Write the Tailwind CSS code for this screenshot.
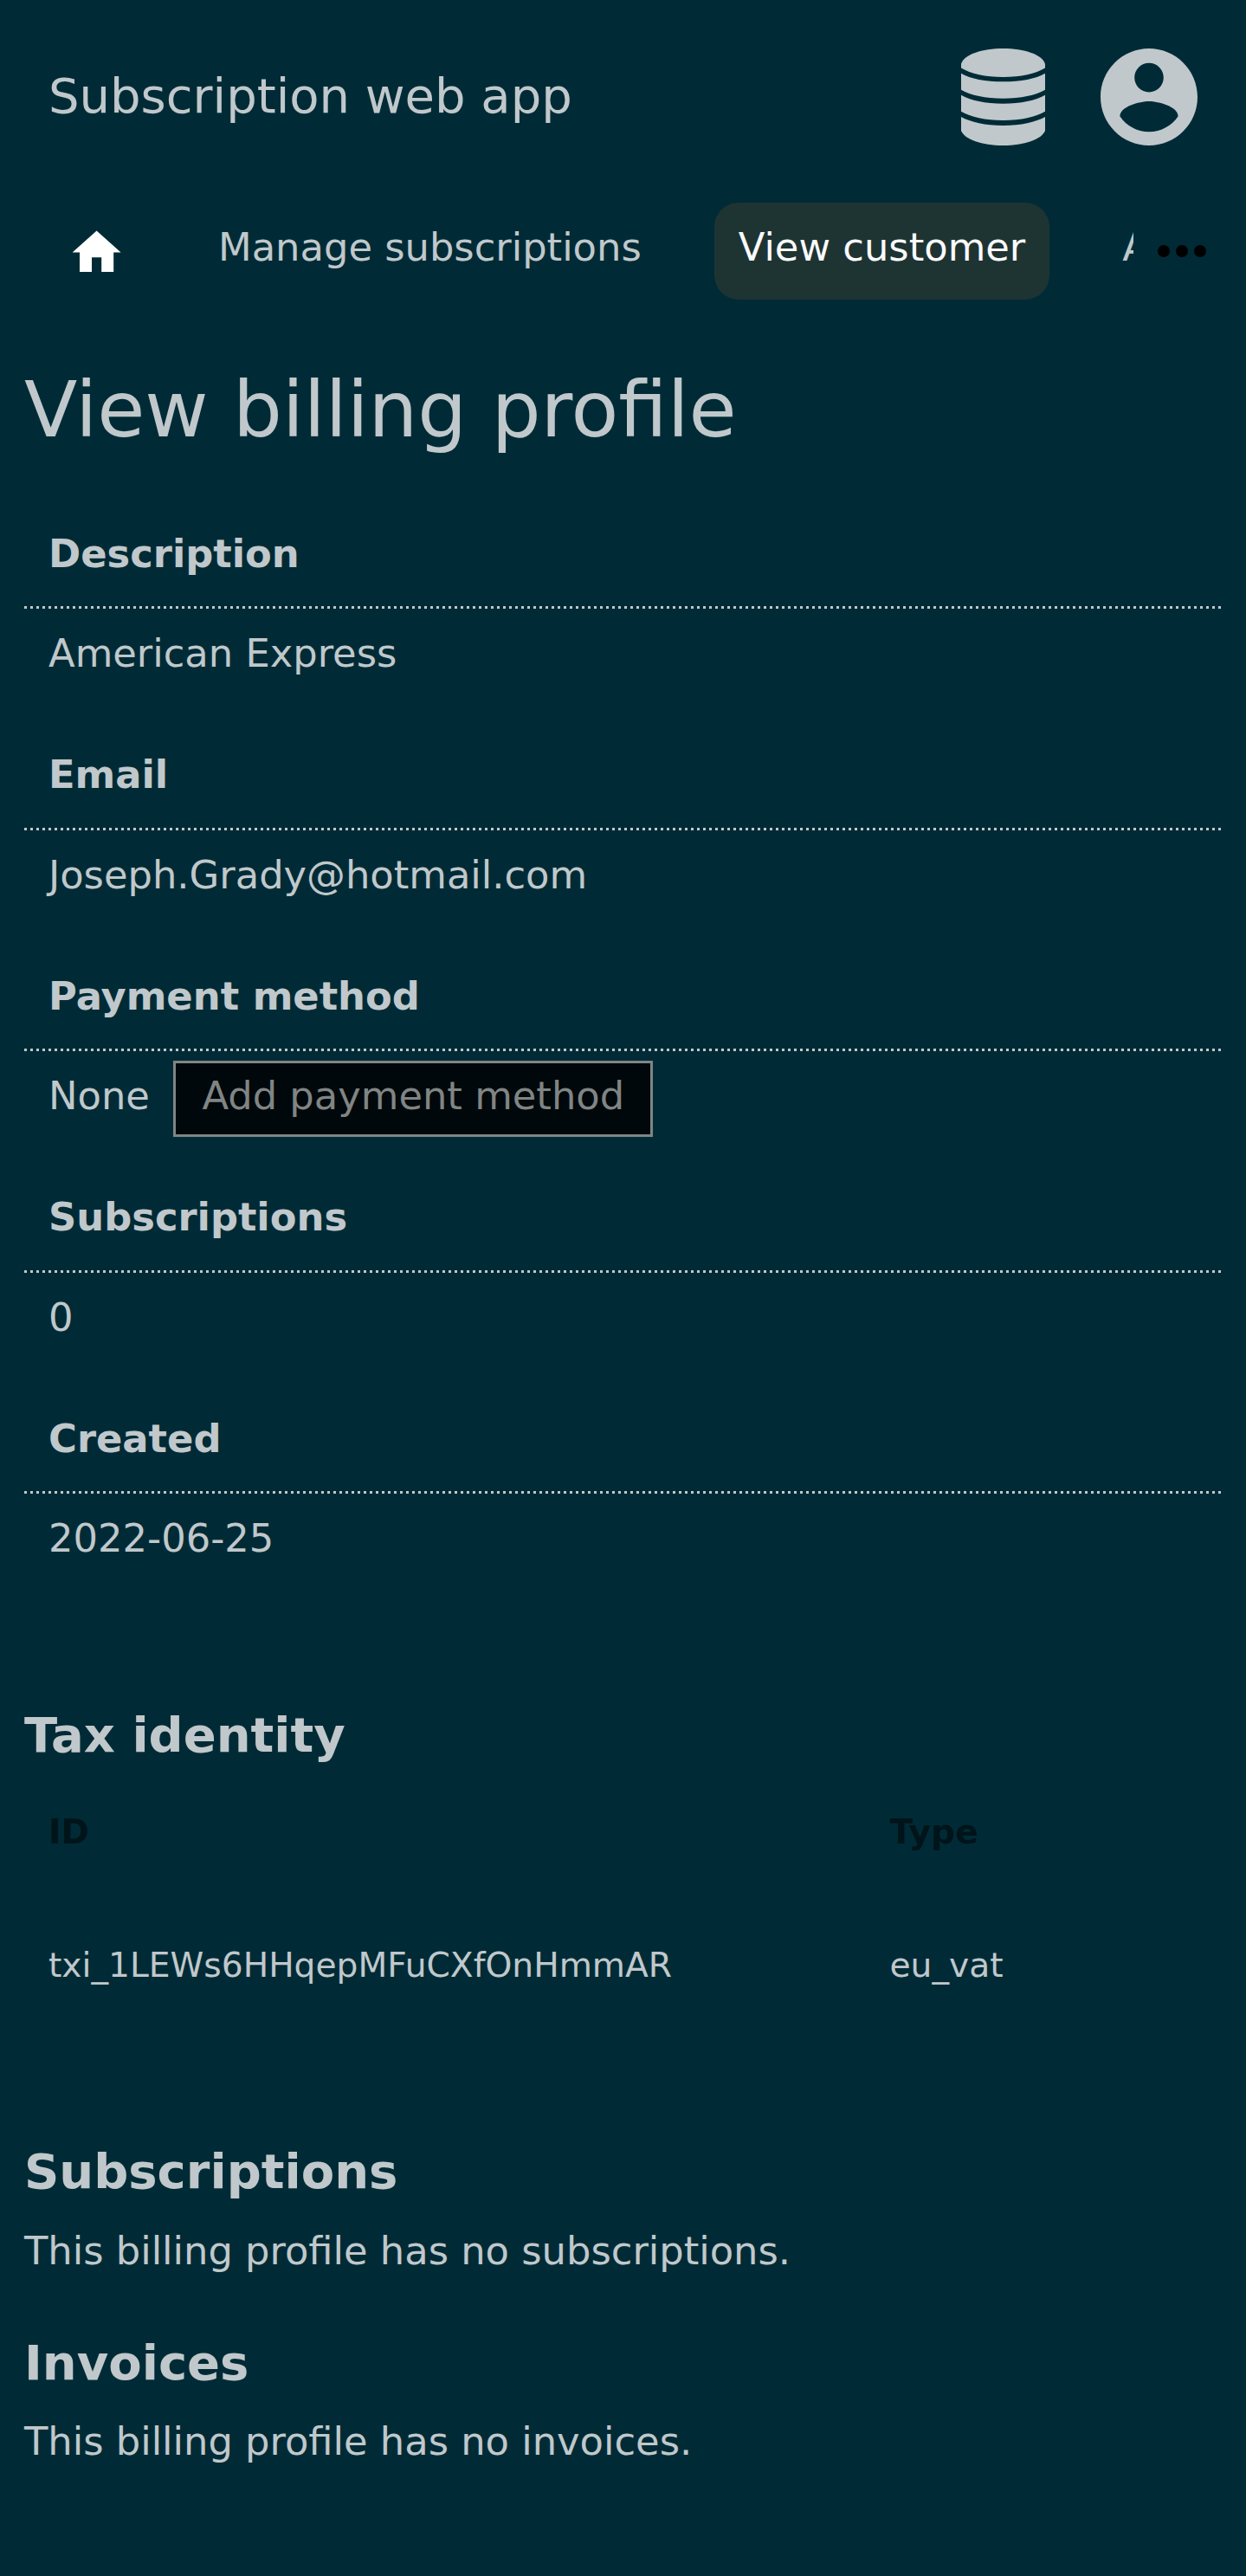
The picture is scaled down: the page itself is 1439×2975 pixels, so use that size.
<!DOCTYPE html>
<html lang="en">
<head>
<meta charset="utf-8">
<title>Subscription web app</title>
<script src="https://cdn.jsdelivr.net/npm/@tailwindcss/browser@4"></script>
</head>
<body class="bg-[#002b36] text-[#c0c8cb] font-['DejaVu_Sans',sans-serif] text-[44.8px] min-h-[2975px] overflow-x-hidden">
<header class="flex h-[224px] items-center justify-between pl-[56px] pr-[56.5px]">
  <div class="text-[56px] leading-[64px] pb-[3px]">Subscription web app</div>
  <div class="flex items-center gap-[64px]">
    <svg class="w-[97px] h-[112px]" viewBox="0 0 97 112" fill="currentColor">
      <path d="M0 18C3 7 24 0 48.500 0S94 7 97 18v4.500C86 29 69 33 48.500 33S11 29 0 22.500z"/>
      <path d="M0 28.700C11 35 28 38.300 48.500 38.300S86 35 97 28.700v19C86 54 69 57.700 48.500 57.700S11 54 0 47.700z"/>
      <path d="M0 53.700C11 60 28 63.700 48.500 63.700S86 60 97 53.700v19C86 79 69 83 48.500 83S11 79 0 72.700z"/>
      <path d="M0 79C11 85 28 89 48.500 89S86 85 97 79v16C93 105 73 112 48.500 112S4 105 0 95z"/>
    </svg>
    <svg class="w-[112px] h-[112px]" viewBox="2 2 20 20" fill="currentColor"><path d="M12 2C6.480 2 2 6.480 2 12s4.480 10 10 10 10-4.480 10-10S17.520 2 12 2zm0 3c1.660 0 3 1.340 3 3s-1.340 3-3 3-3-1.340-3-3 1.340-3 3-3zm0 14.200c-2.500 0-4.710-1.280-6-3.220.03-1.990 4-3.080 6-3.080 1.990 0 5.970 1.090 6 3.080-1.290 1.940-3.500 3.220-6 3.220z"/></svg>
  </div>
</header>
<nav class="flex h-[132px] pt-[10px] pl-[56px]">
  <div class="flex w-[1253px] overflow-hidden gap-[56px] whitespace-nowrap leading-[103px] h-[112px]">
    <a class="w-[112px] shrink-0 pl-[22.4px] pt-[24.4px]"><svg class="w-[67.2px] h-[67.2px]" viewBox="0 0 24 24" fill="#fff"><path d="M10 20v-6h4v6h5v-8h3L12 3 2 12h3v8z"/></svg></a>
    <a class="shrink-0 px-[28px]">Manage subscriptions</a>
    <a class="shrink-0 px-[28px] rounded-[28px] bg-[#1e3433] text-[#fafafa]">View customer</a>
    <a class="shrink-0 px-[28px]">Account</a>
  </div>
  <svg class="ml-[28px] mt-[49px] w-[56px] h-[14px]" viewBox="4 10 16 4" fill="#000"><circle cx="6" cy="12" r="2"/><circle cx="12" cy="12" r="2"/><circle cx="18" cy="12" r="2"/></svg>
</nav>
<main class="px-[28px]">
  <h1 class="pt-[61px] pb-[50.75px] text-[89.6px] leading-[112px]">View billing profile</h1>
  <dl>
    <div class="h-[255.5px]">
      <dt class="h-[120.25px] pl-[28px] font-bold leading-[119px]">Description</dt>
      <div class="h-[3px] bg-[repeating-linear-gradient(90deg,#c0c8cb_0_3.5px,transparent_3.5px_7px)]"></div>
      <dd class="pl-[28px] pt-[1px] leading-[102px]">American Express</dd>
    </div>
    <div class="h-[255.5px]">
      <dt class="h-[120.25px] pl-[28px] font-bold leading-[119px]">Email</dt>
      <div class="h-[3px] bg-[repeating-linear-gradient(90deg,#c0c8cb_0_3.5px,transparent_3.5px_7px)]"></div>
      <dd class="pl-[28px] pt-[1px] leading-[102px]">Joseph.Grady@hotmail.com</dd>
    </div>
    <div class="h-[255.5px]">
      <dt class="h-[120.25px] pl-[28px] font-bold leading-[119px]">Payment method</dt>
      <div class="h-[3px] bg-[repeating-linear-gradient(90deg,#c0c8cb_0_3.5px,transparent_3.5px_7px)]"></div>
      <dd class="flex pl-[28px] pt-[1px] leading-[102px]">None<a class="ml-[27.5px] mt-[10px] h-[88px] border-[3px] border-[#808584] bg-[#00080b] px-[30px] leading-[76px] text-[#808584]">Add payment method</a></dd>
    </div>
    <div class="h-[255.5px]">
      <dt class="h-[120.25px] pl-[28px] font-bold leading-[119px]">Subscriptions</dt>
      <div class="h-[3px] bg-[repeating-linear-gradient(90deg,#c0c8cb_0_3.5px,transparent_3.5px_7px)]"></div>
      <dd class="pl-[28px] pt-[1px] leading-[102px]">0</dd>
    </div>
    <div class="h-[255.5px]">
      <dt class="h-[120.25px] pl-[28px] font-bold leading-[119px]">Created</dt>
      <div class="h-[3px] bg-[repeating-linear-gradient(90deg,#c0c8cb_0_3.5px,transparent_3.5px_7px)]"></div>
      <dd class="pl-[28px] pt-[1px] leading-[102px]">2022-06-25</dd>
    </div>
  </dl>
  <h2 class="pt-[113.5px] text-[56px] font-bold leading-[65px]">Tax identity</h2>
  <div class="grid grid-cols-[971.5px_1fr] pl-[28px] pt-[56px] text-[39.2px] leading-[47px]">
    <div class="font-bold text-[#00141a]">ID</div>
    <div class="font-bold text-[#00141a]">Type</div>
    <div class="pt-[107px]">txi_1LEWs6HHqepMFuCXfOnHmmAR</div>
    <div class="pt-[107px]">eu_vat</div>
  </div>
  <h2 class="pt-[182px] text-[56px] font-bold leading-[65px]">Subscriptions</h2>
  <p class="pt-[33px] leading-[53px]">This billing profile has no subscriptions.</p>
  <h2 class="pt-[70px] text-[56px] font-bold leading-[65px]">Invoices</h2>
  <p class="pt-[32px] leading-[53px]">This billing profile has no invoices.</p>
</main>
</body>
</html>
